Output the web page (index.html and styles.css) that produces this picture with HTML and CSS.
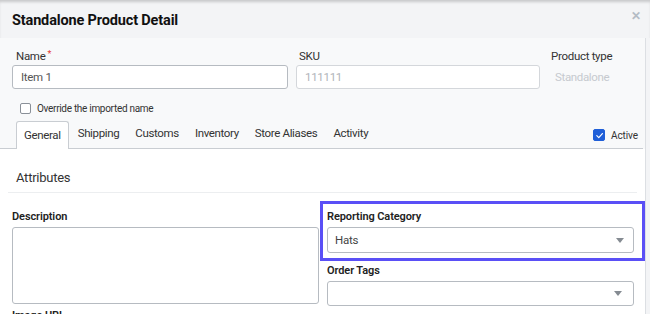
FILE: index.html
```html
<!DOCTYPE html>
<html>
<head>
<meta charset="utf-8">
<link rel="stylesheet" href="styles.css">
</head>
<body>
<div class="modal">
  <div class="header">
    <div class="title">Standalone Product Detail</div>
    <div class="close">&#x2715;</div>
  </div>
  <div class="scroll">
    <div class="top">
      <div class="fields">
        <div class="field name">
          <div class="label">Name<span class="req">*</span></div>
          <div class="input">Item 1</div>
        </div>
        <div class="field sku">
          <div class="label">SKU</div>
          <div class="input disabled">111111</div>
        </div>
        <div class="field ptype">
          <div class="label">Product type</div>
          <div class="static">Standalone</div>
        </div>
      </div>
      <label class="override"><span class="cb"></span>Override the imported name</label>
      <div class="tabs">
        <div class="tab active">General</div>
        <div class="tab">Shipping</div>
        <div class="tab">Customs</div>
        <div class="tab">Inventory</div>
        <div class="tab">Store Aliases</div>
        <div class="tab">Activity</div>
        <div class="active-toggle">
          <span class="cb checked"><svg width="9" height="9" viewBox="0 0 10 10"><path d="M2 5.2 L4.2 7.3 L8.2 2.8" fill="none" stroke="#fff" stroke-width="1.3" stroke-linecap="round" stroke-linejoin="round"/></svg></span>Active
        </div>
      </div>
    </div>
    <div class="content">
      <div class="section-title">Attributes</div>
      <div class="grid">
        <div class="col left">
          <div class="blabel">Description</div>
          <div class="textarea"></div>
          <div class="blabel cut">Image URL</div>
        </div>
        <div class="col right">
          <div class="highlight">
            <div class="blabel">Reporting Category</div>
            <div class="select">Hats<span class="arrow"></span></div>
          </div>
          <div class="blabel tags">Order Tags</div>
          <div class="select tagsel"><span class="arrow"></span></div>
        </div>
      </div>
    </div>
  </div>
</div>
</body>
</html>
```
FILE: styles.css
```css
* { box-sizing: border-box; }
html, body { margin: 0; padding: 0; }
body {
  width: 650px; height: 314px; overflow: hidden;
  font-family: Roboto, "Noto Sans", sans-serif;
  background: #f3f4f6;
  color: #333;
}
.modal { width: 650px; height: 314px; }
.header {
  height: 38px;
  background: #f3f4f6;
  box-shadow: inset 0 3px 3px -1px rgba(0,0,0,0.18);
  display: flex; align-items: center; justify-content: space-between;
  padding: 2px 9px 0 12px;
}
.title { font-size: 14.5px; font-weight: 700; color: #111; letter-spacing: -0.15px; }
.close { font-size: 12px; color: #b4bcc5; font-weight: 700; margin-top: -8px; }
.scroll {
  width: 646px; height: 276px; overflow: hidden;
  border-right: 1px solid #dcdfe3;
  background: #fff;
}
.top { background: #f8f9fa; padding-top: 11px; }
.fields { display: flex; padding-left: 12px; }
.field .label { font-size: 11.5px; letter-spacing: -0.3px; color: #333; padding-left: 4px; height: 14px; line-height: 14px; margin-bottom: 2px; }
.req { color: #e53935; font-size: 9px; margin-left: 2px; position: relative; top: -3px; }
.name { width: 276px; }
.sku { width: 244px; margin-left: 8px; }
.sku .label { padding-left: 3px; }
.ptype { margin-left: 11px; }
.ptype .label { padding-left: 0; }
.input {
  height: 24px; border: 1px solid #b6bbc1; border-radius: 3px; background: #fff;
  font-size: 11.5px; color: #555; padding-left: 8px; line-height: 22px; letter-spacing: -0.3px;
}
.input.disabled { border-color: #d4d7db; color: #b0b4b9; }
.static { font-size: 11.5px; color: #c6cacf; padding: 5px 0 0 4px; line-height: 14px; letter-spacing: -0.35px; }
.override {
  display: flex; align-items: center; font-size: 10px; letter-spacing: -0.3px; color: #333;
  margin: 14px 0 0 20px; height: 11px;
}
.cb {
  display: inline-flex; align-items: center; justify-content: center;
  width: 11px; height: 11px; border: 1px solid #8a9098; border-radius: 2px; background: #fff;
  margin-right: 6px; flex: none;
}
.cb.checked { background: #1f5fd8; border-color: #1f5fd8; width: 12px; height: 12px; }
.tabs {
  display: flex; align-items: flex-end; margin-top: 7px; height: 28px;
  border-bottom: 1px solid #c9cdd2; padding-left: 16px; margin-right: 2px;
}
.tab { font-size: 11.5px; color: #333; padding: 0 8px 8px 8px; line-height: 13px; letter-spacing: -0.35px; }
.tab.active {
  background: #fff; border: 1px solid #c9cdd2; border-bottom: none; border-radius: 3px 3px 0 0;
  padding: 7px 7px 6px 7px; margin-bottom: -1px; height: 28px; margin-right: 1px;
}
.active-toggle {
  margin-left: auto; display: flex; align-items: center; font-size: 10px; color: #333;
  padding-bottom: 7px; margin-right: 5px; letter-spacing: -0.1px;
}
.content { padding-top: 22px; }
.section-title {
  font-size: 13px; letter-spacing: -0.25px; color: #333; line-height: 14px;
  padding: 0 0 7px 8px; border-bottom: 1px solid #eceef0; margin: 0 8px;
}
.grid { display: flex; padding: 8px 0 0 12px; }
.col { display: flex; flex-direction: column; }
.left { width: 308px; padding-top: 10px; }
.right { width: 325px; }
.blabel { font-size: 11px; font-weight: 600; color: #222; line-height: 12px; letter-spacing: -0.1px; }
.textarea { height: 77px; width: 307px; border: 1px solid #b6bbc1; border-radius: 3px; margin-top: 4px; background: #fff; }
.cut { margin-top: 6px; }
.highlight { border: 3px solid #5a4ff6; padding: 7px 8px 5px 4px; width: 325px; }
.select {
  height: 26px; border: 1px solid #b6bbc1; border-radius: 3px; margin-top: 4px; background: #fff;
  font-size: 11.5px; letter-spacing: -0.2px; color: #444; padding-left: 7px; line-height: 24px; position: relative;
  width: 307px;
}
.arrow {
  position: absolute; right: 9px; top: 10px; width: 0; height: 0;
  border-left: 4px solid transparent; border-right: 4px solid transparent; border-top: 5px solid #858b92;
}
.tags { margin-top: 4px; padding-left: 7px; }
.tagsel { margin-left: 7px; height: 25px; }
.tagsel .arrow { top: 9px; right: 11px; }
```
